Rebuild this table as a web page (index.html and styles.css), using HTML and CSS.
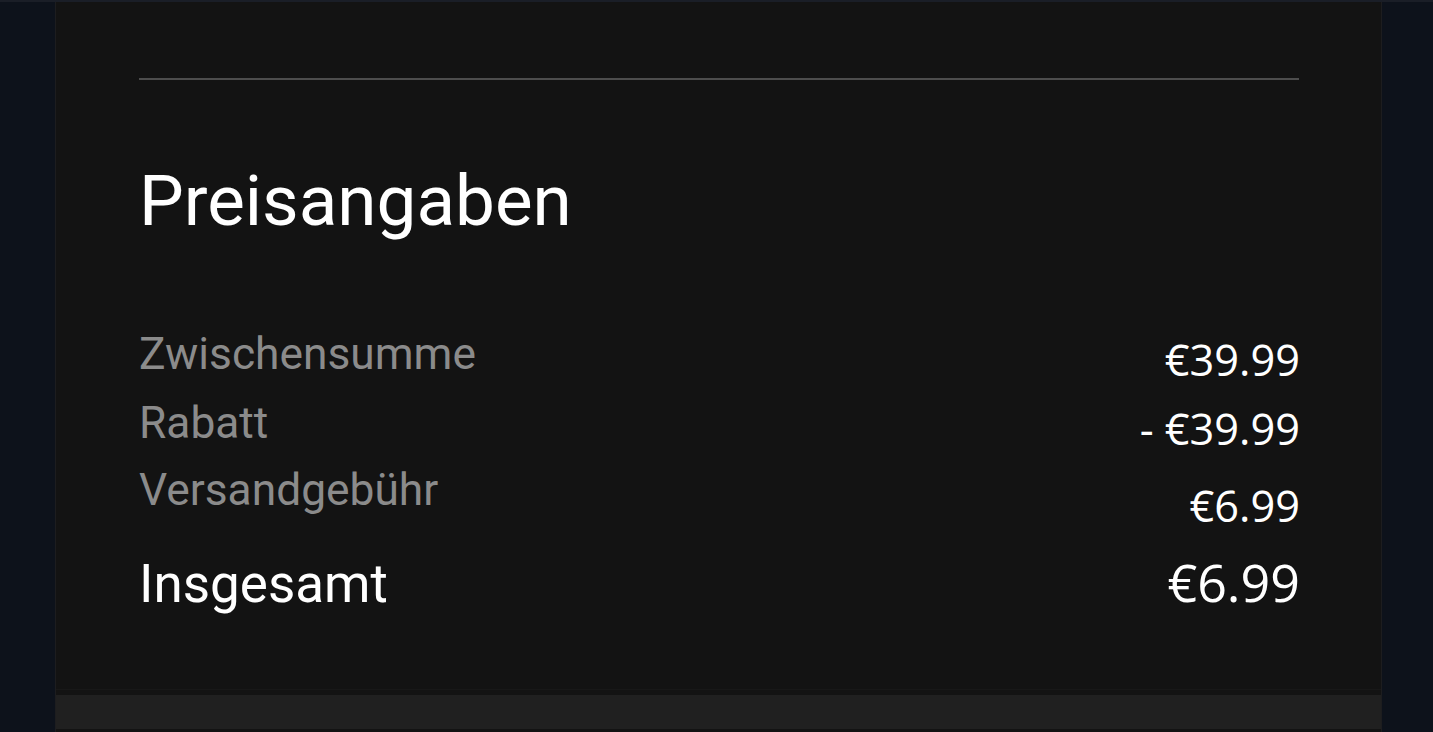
FILE: index.html
```html
<!DOCTYPE html>
<html>
<head>
    <title>Preisangaben</title>
    <meta name="viewport" content="width=device-width, initial-scale=1.0">
<link rel="stylesheet" href="styles.css">
</head>
<body>
    <div class="page">
        <div class="summary-card">
            <hr class="divider">
            <h2 class="summary-title">Preisangaben</h2>
            <div class="price-list">
                <div class="price-row">
                    <span class="price-label">Zwischensumme</span>
                    <span class="price-value shift-small">€39.99</span>
                </div>
                <div class="price-row">
                    <span class="price-label">Rabatt</span>
                    <span class="price-value shift-small">- €39.99</span>
                </div>
                <div class="price-row row-last">
                    <span class="price-label">Versandgebühr</span>
                    <span class="price-value shift-large">€6.99</span>
                </div>
                <div class="price-row total-row">
                    <span class="price-label">Insgesamt</span>
                    <span class="price-value">€6.99</span>
                </div>
            </div>
        </div>
        <div class="bottom-bar"></div>
    </div>
</body>
</html>
```

FILE: styles.css
```css
:root {
    --page-bg: #0d121b;
    --top-strip: #1a1e27;
    --card-bg: #131313;
    --card-edge: #1d1d1f;
    --divider: #4d4d4d;
    --label-color: #8b8b8b;
    --value-color: #ffffff;
    --bar-bg: #202020;
}

body, html {
    height: 100%;
    margin: 0;
    padding: 0;
    overflow: hidden;
    background-color: var(--page-bg);
}

body {
    border-top: 2px solid var(--top-strip);
    box-sizing: border-box;
}

.page {
    margin: 0 51px 0 55px;
    display: flex;
    flex-direction: column;
    height: 100%;
    border-left: 1px solid var(--card-edge);
    border-right: 1px solid var(--card-edge);
    background-color: var(--card-bg);
}

.summary-card {
    height: 688px;
    box-sizing: border-box;
    padding: 76px 82px 0 83px;
    border-bottom: 1px solid #181818;
}

.divider {
    margin: 0;
    border: none;
    height: 2px;
    background-color: var(--divider);
}

.summary-title {
    margin: 79px 0 0 0;
    font-family: Roboto, "Noto Sans", sans-serif;
    font-weight: 400;
    font-size: 71px;
    line-height: normal;
    color: var(--value-color);
}

.price-list {
    margin-top: 86px;
    margin-right: -1px;
    display: flex;
    flex-direction: column;
}

.price-row {
    display: flex;
    justify-content: space-between;
    align-items: flex-start;
    height: 69px;
}

.price-row:nth-child(2) {
    height: 67px;
}

.price-row.row-last {
    height: 87px;
}

.price-label {
    font-family: Roboto, "Noto Sans", sans-serif;
    font-size: 44.3px;
    line-height: 52px;
    color: var(--label-color);
}

.price-value {
    font-family: "Open Sans", "Noto Sans", sans-serif;
    font-size: 43.3px;
    line-height: 52px;
    color: var(--value-color);
}

.shift-small {
    padding-top: 6px;
}

.shift-large {
    padding-top: 16px;
}

.total-row {
    align-items: baseline;
}

.total-row .price-label {
    font-size: 53px;
    line-height: 62px;
    color: var(--value-color);
}

.total-row .price-value {
    font-size: 52px;
    line-height: 62px;
}

.bottom-bar {
    margin-top: 5px;
    height: 34px;
    background-color: var(--bar-bg);
}
```
